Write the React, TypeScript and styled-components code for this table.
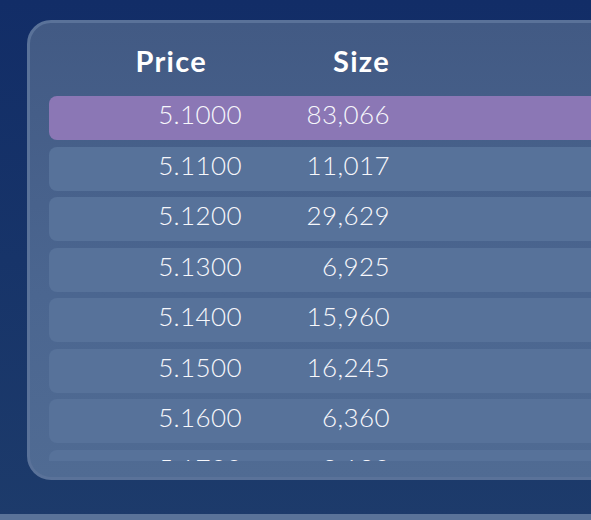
import React from "react";
import styled, { createGlobalStyle } from "styled-components";

const GlobalStyle = createGlobalStyle`
  html, body {
    margin: 0;
    padding: 0;
    overflow: hidden;
    background: #163268;
  }
  body {
    font-family: Lato, "Open Sans", sans-serif;
  }
`;

const levels = [
  { price: "5.1000", size: "83,066", active: true },
  { price: "5.1100", size: "11,017" },
  { price: "5.1200", size: "29,629" },
  { price: "5.1300", size: "6,925" },
  { price: "5.1400", size: "15,960" },
  { price: "5.1500", size: "16,245" },
  { price: "5.1600", size: "6,360" },
  { price: "5.1700", size: "3,180" },
];

export default function App() {
  return (
    <>
      <GlobalStyle />
      <Page>
        <Panel>
          <Header>
            <HeadCell $pad={35}>Price</HeadCell>
            <HeadCell $pad={0}>Size</HeadCell>
          </Header>
          <List>
            {levels.map((l) => (
              <Row key={l.price} $active={!!l.active}>
                <PriceCell>{l.price}</PriceCell>
                <SizeCell>{l.size}</SizeCell>
              </Row>
            ))}
          </List>
        </Panel>
        <NextPanel />
      </Page>
    </>
  );
}

const Page = styled.div`
  width: 591px;
  height: 520px;
  box-sizing: border-box;
  padding: 20px 0 0 27px;
  background: linear-gradient(180deg, #122d67 0%, #173469 50%, #1d3b6b 100%);
  display: flex;
  flex-direction: column;
  overflow: hidden;
`;

const Panel = styled.div`
  width: 640px;
  height: 460px;
  flex-shrink: 0;
  box-sizing: border-box;
  border: 3px solid #5a7299;
  border-radius: 24px;
  background: linear-gradient(180deg, #425a84 0%, #4b6690 60%, #506b93 100%);
  padding: 0 0 16px 19px;
  display: flex;
  flex-direction: column;
`;

const Header = styled.div`
  height: 73px;
  display: grid;
  grid-template-columns: 193px 148px;
  align-items: center;
`;

const HeadCell = styled.div<{ $pad: number }>`
  text-align: right;
  padding-right: ${(p) => p.$pad}px;
  padding-top: 2px;
  color: #ffffff;
  font-size: 29px;
  font-weight: 700;
  letter-spacing: 1.3px;
`;

const List = styled.div`
  height: 365px;
  overflow: hidden;
  display: flex;
  flex-direction: column;
  gap: 6.5px;
`;

const Row = styled.div<{ $active: boolean }>`
  height: 44px;
  flex-shrink: 0;
  display: grid;
  grid-template-columns: 193px 148px;
  align-items: center;
  border-radius: 8px 0 0 8px;
  background: ${(p) => (p.$active ? "#8b77b5" : "#57729a")};
  color: #f7f8fc;
  font-size: 26px;
  font-weight: 300;
  letter-spacing: 0.4px;
  padding-bottom: 8px;
  box-sizing: border-box;
`;

const PriceCell = styled.div`
  text-align: right;
`;

const SizeCell = styled.div`
  text-align: right;
`;

const NextPanel = styled.div`
  margin-top: 34px;
  margin-left: -27px;
  height: 8px;
  flex-shrink: 0;
  background: #5a7399;
`;
